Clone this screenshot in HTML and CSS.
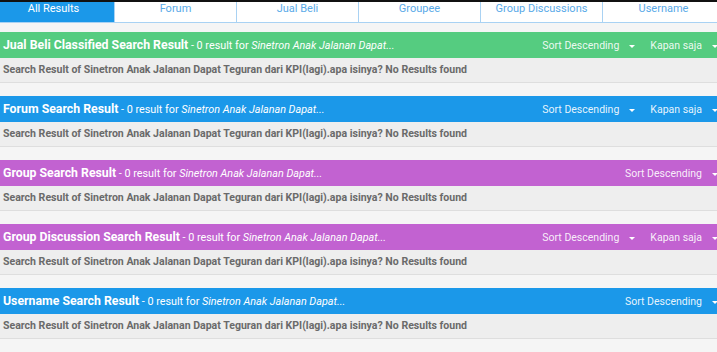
FILE: index.html
```html
<!DOCTYPE html>
<html>
<head>
<meta charset="utf-8">
<link rel="stylesheet" href="styles.css">
</head>
<body>
<div class="page">
  <nav class="tabs">
    <div class="tab active">All Results</div>
    <div class="tab">Forum</div>
    <div class="tab">Jual Beli</div>
    <div class="tab">Groupee</div>
    <div class="tab">Group Discussions</div>
    <div class="tab">Username</div>
  </nav>

  <section class="block">
    <div class="head green">
      <div class="title"><b>Jual Beli Classified Search Result</b> - 0 result for <i>Sinetron Anak Jalanan Dapat...</i></div>
      <div class="tools"><span class="dd">Sort Descending<span class="caret"></span></span><span class="dd">Kapan saja<span class="caret"></span></span></div>
    </div>
    <div class="result">Search Result of Sinetron Anak Jalanan Dapat Teguran dari KPI(lagi).apa isinya? No Results found</div>
  </section>

  <section class="block">
    <div class="head blue">
      <div class="title"><b>Forum Search Result</b> - 0 result for <i>Sinetron Anak Jalanan Dapat...</i></div>
      <div class="tools"><span class="dd">Sort Descending<span class="caret"></span></span><span class="dd">Kapan saja<span class="caret"></span></span></div>
    </div>
    <div class="result">Search Result of Sinetron Anak Jalanan Dapat Teguran dari KPI(lagi).apa isinya? No Results found</div>
  </section>

  <section class="block">
    <div class="head purple">
      <div class="title"><b>Group Search Result</b> - 0 result for <i>Sinetron Anak Jalanan Dapat...</i></div>
      <div class="tools"><span class="dd">Sort Descending<span class="caret"></span></span></div>
    </div>
    <div class="result">Search Result of Sinetron Anak Jalanan Dapat Teguran dari KPI(lagi).apa isinya? No Results found</div>
  </section>

  <section class="block">
    <div class="head purple">
      <div class="title"><b>Group Discussion Search Result</b> - 0 result for <i>Sinetron Anak Jalanan Dapat...</i></div>
      <div class="tools"><span class="dd">Sort Descending<span class="caret"></span></span><span class="dd">Kapan saja<span class="caret"></span></span></div>
    </div>
    <div class="result">Search Result of Sinetron Anak Jalanan Dapat Teguran dari KPI(lagi).apa isinya? No Results found</div>
  </section>

  <section class="block">
    <div class="head blue">
      <div class="title"><b>Username Search Result</b> - 0 result for <i>Sinetron Anak Jalanan Dapat...</i></div>
      <div class="tools"><span class="dd">Sort Descending<span class="caret"></span></span></div>
    </div>
    <div class="result">Search Result of Sinetron Anak Jalanan Dapat Teguran dari KPI(lagi).apa isinya? No Results found</div>
  </section>
</div>
</body>
</html>
```

FILE: styles.css
```css
html, body {
  margin: 0;
  padding: 0;
  background: #f5f5f5;
  overflow: hidden;
}
body {
  font-family: Roboto, "Liberation Sans", Arial, sans-serif;
  width: 717px;
  height: 352px;
}
.page {
  border-top: 2px solid #111;
}
.tabs {
  display: flex;
  margin-left: -7px;
  width: 732px;
  height: 20px;
  border-bottom: 1px solid #a9d2f3;
  background: #fff;
}
.tab {
  flex: 0 0 122px;
  box-sizing: border-box;
  text-align: center;
  font-size: 11px;
  line-height: 14px;
  color: #5aaae8;
  border-right: 1px solid #a9d2f3;
}
.tab.active {
  background: #1b98e9;
  color: #fff;
}
.block {
  margin-top: 9px;
}
.block + .block {
  margin-top: 13px;
}
.head {
  height: 26px;
  display: flex;
  align-items: center;
  justify-content: space-between;
  padding-left: 3px;
  color: #fff;
  font-size: 10.8px;
  white-space: nowrap;
}
.head b {
  font-size: 12.3px;
  font-weight: 700;
}
.head i {
  font-style: italic;
}
.green { background: #55cc80; }
.blue { background: #1b98e9; }
.purple { background: #c262d1; }
.tools {
  display: flex;
  gap: 15px;
  margin-right: -1px;
  color: rgba(255,255,255,0.9);
}
.dd {
  display: flex;
  align-items: center;
  font-size: 10.5px;
}
.caret {
  display: inline-block;
  width: 0;
  height: 0;
  border-left: 3px solid transparent;
  border-right: 3px solid transparent;
  border-top: 3px solid #fff;
  margin-left: 10px;
  margin-top: 2px;
}
.result {
  height: 24px;
  line-height: 24px;
  background: #eeeeee;
  border-bottom: 1px solid #dedede;
  padding-left: 3px;
  color: #6a6a6a;
  font-size: 10.55px;
  font-weight: 700;
  white-space: nowrap;
}
```
